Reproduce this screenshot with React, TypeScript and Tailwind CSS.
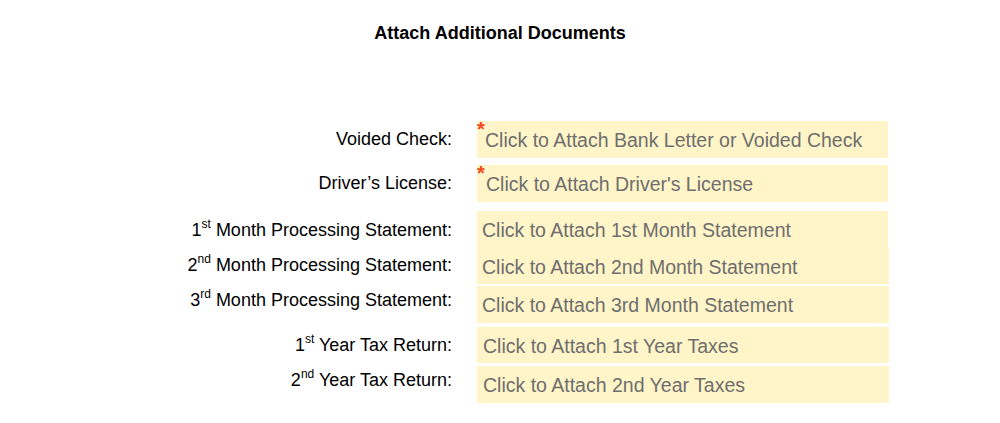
import React from "react";

type Row = {
  label: React.ReactNode;
  text: string;
  required?: boolean;
  mt: string;
  h: string;
  w: string;
  pl: string;
  labelShift?: string;
};

const sup = (s: string) => (
  <sup className="text-[12px] relative top-[-1px] align-super leading-none">{s}</sup>
);

const rows: Row[] = [
  { label: "Voided Check:", text: "Click to Attach Bank Letter or Voided Check", required: true, mt: "mt-0", h: "h-[37px]", w: "w-[411px]", pl: "pl-[8px]" },
  { label: "Driver\u2019s License:", text: "Click to Attach Driver's License", required: true, mt: "mt-[7px]", h: "h-[37px]", w: "w-[411px]", pl: "pl-[9px]" },
  { label: <>1{sup("st")} Month Processing Statement:</>, text: "Click to Attach 1st Month Statement", mt: "mt-[9px]", h: "h-[37px]", w: "w-[411px]", pl: "pl-[5px]" },
  { label: <>2{sup("nd")} Month Processing Statement:</>, text: "Click to Attach 2nd Month Statement", mt: "mt-0", h: "h-[36px]", w: "w-[412px]", pl: "pl-[5px]", labelShift: "mb-[2px]" },
  { label: <>3{sup("rd")} Month Processing Statement:</>, text: "Click to Attach 3rd Month Statement", mt: "mt-[2px]", h: "h-[37px]", w: "w-[412px]", pl: "pl-[5px]", labelShift: "mb-[9px]" },
  { label: <>1{sup("st")} Year Tax Return:</>, text: "Click to Attach 1st Year Taxes", mt: "mt-[4px]", h: "h-[36px]", w: "w-[412px]", pl: "pl-[6px]" },
  { label: <>2{sup("nd")} Year Tax Return:</>, text: "Click to Attach 2nd Year Taxes", mt: "mt-[3px]", h: "h-[37px]", w: "w-[412px]", pl: "pl-[6px]", labelShift: "mb-[9px]" },
];

export default function App() {
  return (
    <div
      className="w-[1000px] h-[423px] bg-white overflow-hidden"
      style={{ fontFamily: '"Liberation Sans", Arial, sans-serif' }}
    >
      <h1 className="pt-[23px] text-center text-[18px] leading-[21px] font-bold text-black">
        Attach Additional Documents
      </h1>
      <div className="mt-[77px] flex flex-col">
        {rows.map((r, i) => (
          <div key={i} className={`flex items-center ${r.mt}`}>
            <div
              className={`w-[452px] text-right text-[18px] leading-[21px] text-black ${r.labelShift ?? ""}`}
            >
              {r.label}
            </div>
            <div
              className={`relative ml-[25px] ${r.w} ${r.h} ${r.pl} flex items-center bg-[#fff5c8] text-[19.5px] leading-[22px] text-[#6e6e6e]`}
            >
              {r.required && (
                <span className="absolute left-[0px] top-[-2px] text-[20px] leading-[20px] font-bold text-[#f5461a]">
                  *
                </span>
              )}
              <span className="pt-[1px]">{r.text}</span>
            </div>
          </div>
        ))}
      </div>
    </div>
  );
}
